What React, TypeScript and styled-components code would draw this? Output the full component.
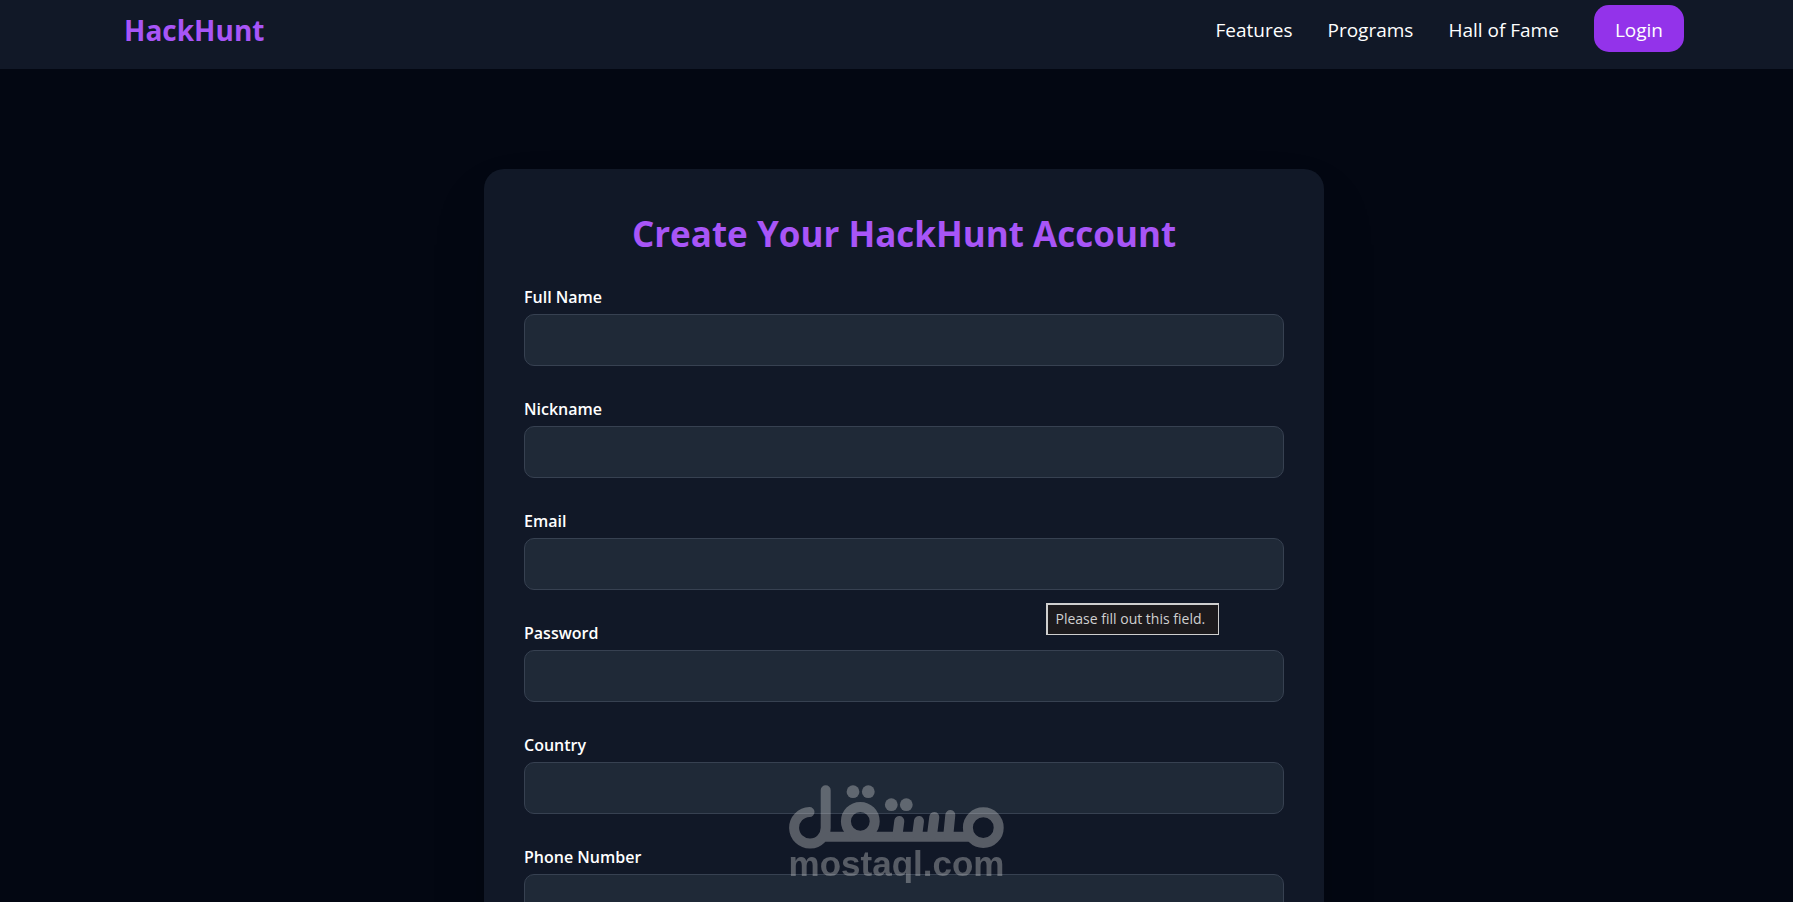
import React from "react";
import styled, { createGlobalStyle } from "styled-components";

const GlobalStyle = createGlobalStyle`
  *, *::before, *::after { box-sizing: border-box; }
  html { background: #030712; }
  body {
    margin: 0;
    height: 100vh;
    overflow: hidden;
    background: #030712;
    color: #fff;
    font-family: "Segoe UI", "Open Sans", "Noto Sans", sans-serif;
  }
`;

const Header = styled.header`
  display: flex;
  align-items: flex-start;
  justify-content: space-between;
  padding: 5px 109px 14px 124px;
  background: #111827;
`;

const Logo = styled.a`
  color: #a855f7;
  font-size: 28px;
  font-weight: 700;
  line-height: 50px;
  text-decoration: none;
`;

const Nav = styled.nav`
  display: flex;
  align-items: flex-start;
  gap: 35px;
`;

const NavLink = styled.a`
  color: #fff;
  font-size: 19px;
  line-height: 50px;
  text-decoration: none;
`;

const LoginButton = styled.button`
  height: 47px;
  padding: 3px 21px 0;
  border: 0;
  border-radius: 15px;
  background: #9333ea;
  color: #fff;
  font: inherit;
  font-size: 19px;
`;

const Main = styled.main`
  display: flex;
  justify-content: center;
  padding: 100px 0 100px 15px;
`;

const Card = styled.form`
  width: 100%;
  max-width: 840px;
  padding: 40px;
  border-radius: 20px;
  background: #111827;
  box-shadow: 0 31px 62px -15px rgba(0, 0, 0, 0.25);
`;

const Title = styled.h1`
  margin: 0 0 26px;
  color: #a855f7;
  font-size: 35px;
  font-weight: 700;
  line-height: 50px;
  text-align: center;
`;

const Field = styled.div`
  margin-bottom: 31px;
`;

const Label = styled.label`
  display: block;
  margin-bottom: 4px;
  font-size: 16px;
  font-weight: 600;
  line-height: 25px;
`;

const Input = styled.input`
  display: block;
  width: 100%;
  height: 52px;
  padding: 0 16px;
  border: 1px solid #374151;
  border-radius: 10px;
  background: #1f2937;
  color: #fff;
  font: inherit;
`;

const Tooltip = styled.div`
  position: absolute;
  top: 603px;
  left: calc(50% + 149px);
  padding: 4px 13px 5px 8px;
  border: solid #cfcfcf;
  border-width: 2px 1px 1px 2px;
  background: #1c1a1d;
  color: #d0d0d0;
  font-size: 14px;
  line-height: 20px;
  white-space: nowrap;
`;

const Watermark = styled.div`
  position: fixed;
  bottom: 23px;
  left: 50%;
  width: 216px;
  margin-left: -108px;
  opacity: 0.36;
  color: #d4d4d4;
  font-family: "Liberation Sans", Arial, sans-serif;
  font-size: 35px;
  font-weight: 700;
  line-height: 30px;
  text-align: center;
  pointer-events: none;
`;

const Mark = styled.svg`
  display: block;
  width: 216px;
  height: 64px;
`;

const fields = [
  { id: "name", label: "Full Name", type: "text" },
  { id: "nickname", label: "Nickname", type: "text" },
  { id: "email", label: "Email", type: "email" },
  { id: "password", label: "Password", type: "password" },
  { id: "country", label: "Country", type: "text" },
  { id: "phone", label: "Phone Number", type: "tel" },
];

export default function App() {
  return (
    <>
      <GlobalStyle />
      <Header>
        <Logo href="#">HackHunt</Logo>
        <Nav>
          <NavLink href="#features">Features</NavLink>
          <NavLink href="#programs">Programs</NavLink>
          <NavLink href="#hall">Hall of Fame</NavLink>
          <LoginButton type="button">Login</LoginButton>
        </Nav>
      </Header>
      <Main>
        <Card>
          <Title>Create Your HackHunt Account</Title>
          {fields.map((f) => (
            <Field key={f.id}>
              <Label htmlFor={f.id}>{f.label}</Label>
              <Input id={f.id} type={f.type} required />
            </Field>
          ))}
        </Card>
      </Main>
      <Tooltip role="tooltip">Please fill out this field.</Tooltip>
      <Watermark>
        <Mark viewBox="0 0 216 64" fill="none" stroke="currentColor" strokeWidth="10" strokeLinecap="round" aria-hidden="true">
          <path d="M20.5 27 A15.8 15.8 0 1 0 36.7 42.5 V5.2 M34 51.7 H179" />
          <circle cx="71.3" cy="36.3" r="14.4" />
          <circle cx="194.3" cy="42.7" r="15.4" />
          <path d="M110.3 36 L108.5 50 M130 36 L128.2 50 M145.3 32 L143 50 M161.3 30 L159.3 50" />
          <g fill="currentColor" stroke="none">
            <circle cx="64" cy="6.7" r="6.4" />
            <circle cx="79.3" cy="6.7" r="6.4" />
            <circle cx="102.3" cy="19.7" r="6.4" />
            <circle cx="117.3" cy="19.7" r="6.4" />
          </g>
        </Mark>
        mostaql.com
      </Watermark>
    </>
  );
}
